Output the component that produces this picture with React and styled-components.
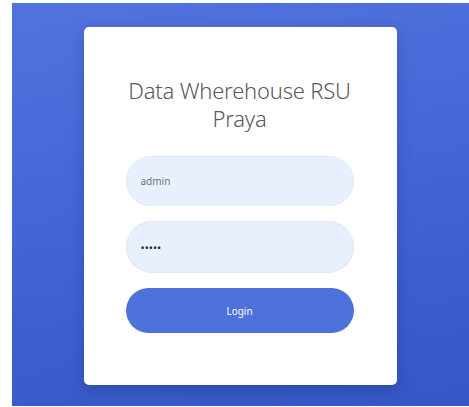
import React from 'react';
import styled, { createGlobalStyle } from 'styled-components';

const GlobalStyle = createGlobalStyle`
    html, body {
        margin: 0;
        padding: 0;
        background: #ffffff;
    }
    body {
        font-family: "Noto Sans", "Liberation Sans", sans-serif;
    }
`;

const Page = styled.div`
    padding: 3px 0 1px 12px;
`;

const Backdrop = styled.div`
    display: flex;
    justify-content: center;
    align-items: flex-start;
    height: 403px;
    padding: 24px 1px 0 0;
    box-sizing: border-box;
    background: linear-gradient(170deg, #5273de 0%, #4466d6 45%, #3556c4 100%);
`;

const Card = styled.div`
    width: 313px;
    height: 358px;
    box-sizing: border-box;
    padding: 49px 43px 0 42px;
    background: #ffffff;
    border-radius: 5px;
    box-shadow: 0 5px 14px rgba(20, 40, 110, 0.3);
    display: flex;
    flex-direction: column;
`;

const Title = styled.h1`
    margin: 0 0 24px;
    font-size: 22px;
    font-weight: 300;
    line-height: 28px;
    color: #58595f;
    text-align: center;
    letter-spacing: -0.2px;
`;

const Form = styled.form`
    display: flex;
    flex-direction: column;
    gap: 15px;
`;

const Field = styled.input`
    height: ${p => p.$tall ? 52 : 50}px;
    box-sizing: border-box;
    padding: 0 15px;
    border: none;
    border-radius: 999px;
    background: #e8f0fe;
    box-shadow: inset 0 0 0 1px #e3e8f3;
    font-family: inherit;
    font-size: ${p => p.type === 'password' ? 11 : 10}px;
    color: ${p => p.type === 'password' ? '#2b2b2b' : '#6e707e'};
    outline: none;
`;

const Button = styled.button`
    height: 45px;
    border: none;
    border-radius: 999px;
    background: #4f71dc;
    color: #ffffff;
    font-family: inherit;
    font-size: 10px;
    cursor: pointer;
`;

function App() {
    return (
        <Page>
            <GlobalStyle />
            <Backdrop>
                <Card>
                    <Title>
                        Data Wherehouse RSU
                        <br />
                        Praya
                    </Title>
                    <Form onSubmit={e => e.preventDefault()}>
                        <Field type="text" defaultValue="admin" />
                        <Field type="password" defaultValue="admin" $tall />
                        <Button type="submit">Login</Button>
                    </Form>
                </Card>
            </Backdrop>
        </Page>
    );
}

export default App;
